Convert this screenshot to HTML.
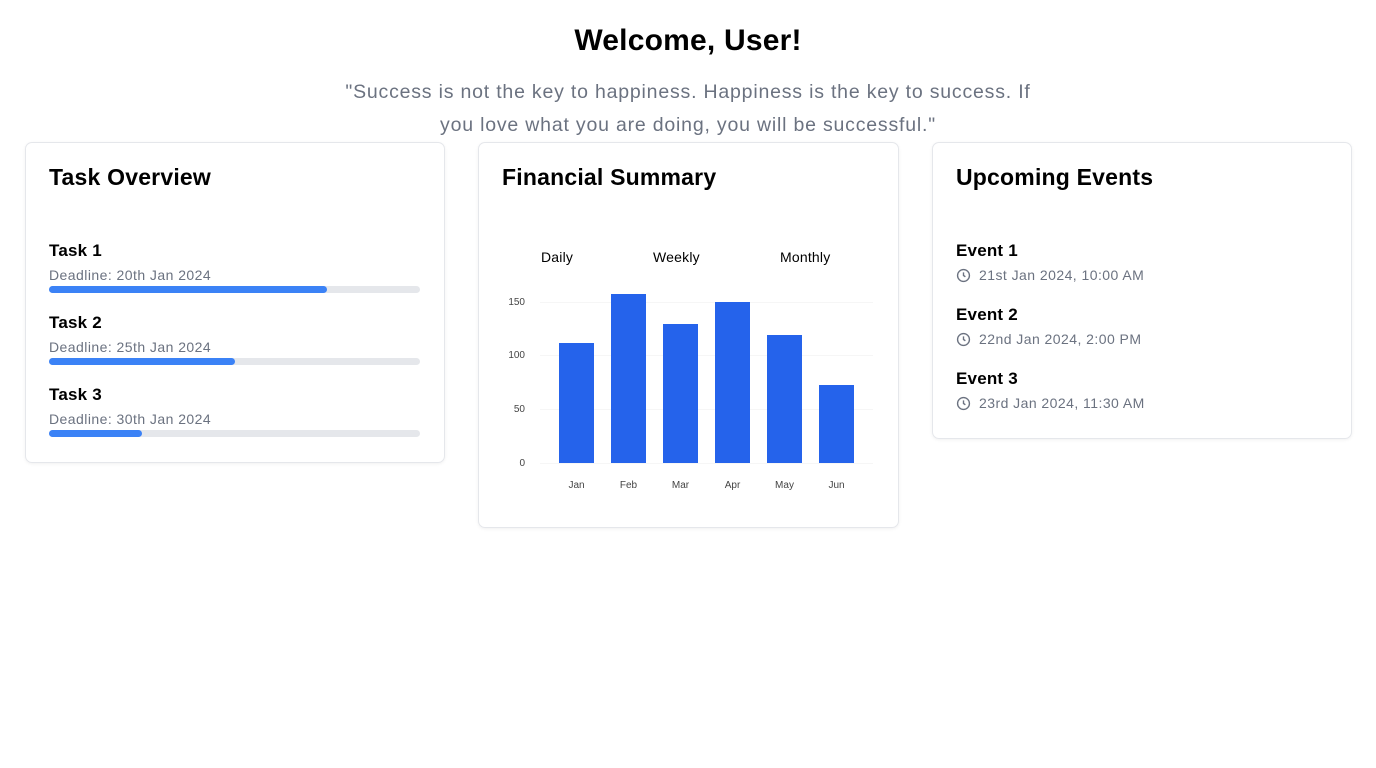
<!DOCTYPE html>
<html><head><meta charset="utf-8"><style>
*{margin:0;padding:0;box-sizing:border-box}
body{width:1376px;height:768px;background:#fff;font-family:"Liberation Sans",sans-serif;position:relative;overflow:hidden;color:#000}
.a{position:absolute;white-space:nowrap}
.card{position:absolute;border:1px solid #e5e7eb;border-radius:7px;box-shadow:0 1px 3px rgba(0,0,0,.06)}
h2{position:absolute;font-size:23px;font-weight:bold;letter-spacing:0.2px}
.t{font-size:17px;font-weight:bold;letter-spacing:.2px}
.s{font-size:14px;color:#6b7280;letter-spacing:.45px}
.pb{position:absolute;left:49px;width:371px;height:7px;background:#e5e7eb;border-radius:4px}
.pb i{display:block;height:100%;background:#3b82f6;border-radius:4px}
.bar{position:absolute;background:#2563eb;width:35px}
.yl{position:absolute;font-size:10px;color:#444;width:20px;text-align:right;left:505px}
.xl{position:absolute;font-size:10px;color:#444;top:480px;width:35px;text-align:center}
.g{position:absolute;left:540px;width:333px;height:1px;background:#f6f6f6}
.ev svg{vertical-align:-3px;margin-right:8px}
</style></head><body>
<div class="a" style="left:0;width:1376px;text-align:center;top:24px;font-size:30px;font-weight:bold;letter-spacing:.2px">Welcome, User!</div>
<div class="a" style="left:0;width:1376px;text-align:center;top:76px;font-size:19.5px;color:#6b7280;line-height:33px;letter-spacing:.8px">"Success is not the key to happiness. Happiness is the key to success. If<br>you love what you are doing, you will be successful."</div>

<div class="card" style="left:25px;top:142px;width:420px;height:321px"></div>
<h2 style="left:49px;top:164px">Task Overview</h2>
<div class="a t" style="left:49px;top:241px">Task 1</div>
<div class="a s" style="left:49px;top:267px">Deadline: 20th Jan 2024</div>
<div class="pb" style="top:286px"><i style="width:278px"></i></div>
<div class="a t" style="left:49px;top:313px">Task 2</div>
<div class="a s" style="left:49px;top:339px">Deadline: 25th Jan 2024</div>
<div class="pb" style="top:358px"><i style="width:186px"></i></div>
<div class="a t" style="left:49px;top:385px">Task 3</div>
<div class="a s" style="left:49px;top:411px">Deadline: 30th Jan 2024</div>
<div class="pb" style="top:430px"><i style="width:93px"></i></div>

<div class="card" style="left:478px;top:142px;width:421px;height:386px"></div>
<h2 style="left:502px;top:164px">Financial Summary</h2>
<div class="a" style="left:541px;top:249px;font-size:14px;letter-spacing:.2px">Daily</div>
<div class="a" style="left:653px;top:249px;font-size:14px;letter-spacing:.2px">Weekly</div>
<div class="a" style="left:780px;top:249px;font-size:14px;letter-spacing:.2px">Monthly</div>
<div class="g" style="top:302px"></div><div class="g" style="top:355px"></div><div class="g" style="top:409px"></div><div class="g" style="top:463px"></div>
<div class="yl" style="top:297px">150</div><div class="yl" style="top:350px">100</div><div class="yl" style="top:404px">50</div><div class="yl" style="top:458px">0</div>
<div class="bar" style="left:559px;top:343px;height:120px"></div>
<div class="bar" style="left:611px;top:294px;height:169px"></div>
<div class="bar" style="left:663px;top:324px;height:139px"></div>
<div class="bar" style="left:715px;top:302px;height:161px"></div>
<div class="bar" style="left:767px;top:335px;height:128px"></div>
<div class="bar" style="left:819px;top:385px;height:78px"></div>
<div class="xl" style="left:559px">Jan</div><div class="xl" style="left:611px">Feb</div><div class="xl" style="left:663px">Mar</div><div class="xl" style="left:715px">Apr</div><div class="xl" style="left:767px">May</div><div class="xl" style="left:819px">Jun</div>

<div class="card" style="left:932px;top:142px;width:420px;height:297px"></div>
<h2 style="left:956px;top:164px">Upcoming Events</h2>
<div class="a t" style="left:956px;top:241px">Event 1</div>
<div class="a s ev" style="left:956px;top:267px"><svg width="15" height="15" viewBox="0 0 24 24" fill="none" stroke="#6b7280" stroke-width="2.2"><circle cx="12" cy="12" r="9.5"/><path d="M12 7v5l3 2"/></svg>21st Jan 2024, 10:00 AM</div>
<div class="a t" style="left:956px;top:305px">Event 2</div>
<div class="a s ev" style="left:956px;top:331px"><svg width="15" height="15" viewBox="0 0 24 24" fill="none" stroke="#6b7280" stroke-width="2.2"><circle cx="12" cy="12" r="9.5"/><path d="M12 7v5l3 2"/></svg>22nd Jan 2024, 2:00 PM</div>
<div class="a t" style="left:956px;top:369px">Event 3</div>
<div class="a s ev" style="left:956px;top:395px"><svg width="15" height="15" viewBox="0 0 24 24" fill="none" stroke="#6b7280" stroke-width="2.2"><circle cx="12" cy="12" r="9.5"/><path d="M12 7v5l3 2"/></svg>23rd Jan 2024, 11:30 AM</div>
</body></html>
